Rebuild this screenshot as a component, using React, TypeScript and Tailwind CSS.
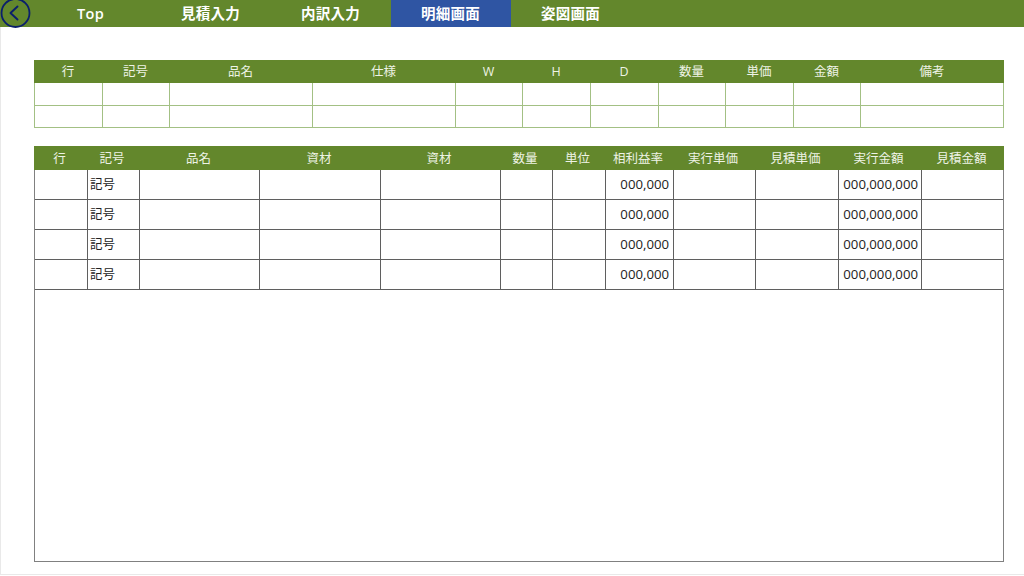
const font = { fontFamily: '"Open Sans","Noto Sans CJK JP",sans-serif' };

const tabs = ["Top", "見積入力", "内訳入力", "明細画面", "姿図画面"];
const topCols = ["行", "記号", "品名", "仕様", "W", "H", "D", "数量", "単価", "金額", "備考"];
const bottomCols = ["行", "記号", "品名", "資材", "資材", "数量", "単位", "相利益率", "実行単価", "見積単価", "実行金額", "見積金額"];

function BackIcon() {
  return (
    <svg width="31" height="28" viewBox="0 0 31 28" fill="none" className="block shrink-0 overflow-visible">
      <circle cx="15.5" cy="13" r="14" stroke="#0b1f6b" strokeWidth="1.8" />
      <path d="M17.5 6.5 L10.5 13 L17.5 19.5" stroke="#0b1f6b" strokeWidth="1.9" strokeLinecap="round" strokeLinejoin="round" />
    </svg>
  );
}

export default function App() {
  return (
    <div style={font} className="w-[1024px] h-[576px] overflow-hidden bg-white flex flex-col">
      <nav className="h-[27px] bg-[#63872c] flex shrink-0">
        <BackIcon />
        {tabs.map((t) => (
          <div
            key={t}
            className={`w-[120px] flex items-center justify-center pr-[1px] text-[14.5px] font-semibold text-white tracking-[0.3px] ${t === "明細画面" ? "bg-[#2f55a3]" : ""}`}
          >
            {t}
          </div>
        ))}
      </nav>

      <div className="flex-1 flex flex-col border-l border-b border-[#e9e9e9] mb-[1px] pl-[33px] pr-[20px] pt-[33px] pb-[12px]">
        <section className="border border-t-0 border-[#a3c084]">
          <div className="grid grid-cols-[68px_67px_143px_143px_67px_68px_68px_67px_68px_67px_1fr] h-[23px] -mx-px bg-[#63872c]">
            {topCols.map((c, i) => (
              <div key={i} className="flex items-center justify-center pt-[2px] text-[12.5px] text-[#eef3e6]">{c}</div>
            ))}
          </div>
          {[0, 1].map((r) => (
            <div
              key={r}
              className={`grid grid-cols-[67px_67px_143px_143px_67px_68px_68px_67px_68px_67px_1fr] h-[22px] ${r === 1 ? "border-t border-[#a3c084]" : ""}`}
            >
              {topCols.map((_, i) => (
                <div key={i} className={i > 0 ? "border-l border-[#a3c084]" : ""} />
              ))}
            </div>
          ))}
        </section>

        <section className="mt-[18px] flex-1 flex flex-col border border-t-0 border-[#808080]">
          <div className="grid grid-cols-[53px_52px_121px_120px_120px_52px_53px_68px_82px_83px_83px_1fr] h-[24px] -mx-px bg-[#63872c]">
            {bottomCols.map((c, i) => (
              <div key={i} className="flex items-center justify-center pt-[2px] pr-[2px] text-[12.5px] text-[#eef3e6]">{c}</div>
            ))}
          </div>
          {[0, 1, 2, 3].map((r) => (
            <div
              key={r}
              className="grid grid-cols-[52px_52px_120px_121px_120px_52px_53px_68px_82px_83px_83px_1fr] h-[30px] border-b border-[#5f5f5f] text-[#222222]"
            >
              {bottomCols.map((_, i) => (
                <div
                  key={i}
                  className={`flex items-center pt-[1px] ${i > 0 ? "border-l border-[#5f5f5f]" : ""} ${i === 1 ? "pl-[2px] text-[12.5px]" : "text-[13.2px]"} ${i === 7 ? "justify-end pr-[4px]" : ""} ${i === 10 ? "justify-end pr-[3px]" : ""}`}
                >
                  {i === 1 ? "記号" : i === 7 ? "000,000" : i === 10 ? "000,000,000" : ""}
                </div>
              ))}
            </div>
          ))}
        </section>
      </div>
    </div>
  );
}
